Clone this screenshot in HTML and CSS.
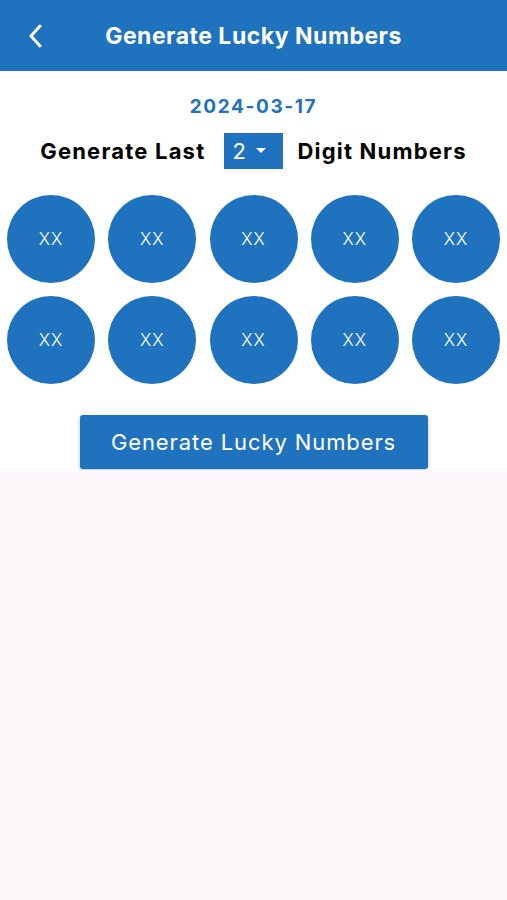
FILE: index.html
```html
<!DOCTYPE html>
<html lang="en">
<head>
  <meta charset="UTF-8" />
  <meta name="viewport" content="width=device-width, initial-scale=1.0" />
  <title>Generate Lucky Numbers</title>
  <link rel="stylesheet" href="styles.css">
</head>
<body>
  <header class="app-bar">
    <button class="back-btn" aria-label="Back">
      <svg width="14" height="24" viewBox="0 0 14 24"><path d="M12 2 L3 12 L12 22" fill="none" stroke="#fff" stroke-width="3" stroke-linecap="round" stroke-linejoin="round"/></svg>
    </button>
    <h1>Generate Lucky Numbers</h1>
  </header>

  <main class="content">
    <div class="date">2024-03-17</div>

    <div class="digits-row">
      <span>Generate Last</span>
      <div class="select">
        <span>2</span>
        <svg width="10" height="6" viewBox="0 0 10 6"><path d="M0 0 L10 0 L5 5 Z" fill="#fff"/></svg>
      </div>
      <span>Digit Numbers</span>
    </div>

    <div class="balls">
      <div class="ball">XX</div>
      <div class="ball">XX</div>
      <div class="ball">XX</div>
      <div class="ball">XX</div>
      <div class="ball">XX</div>
      <div class="ball">XX</div>
      <div class="ball">XX</div>
      <div class="ball">XX</div>
      <div class="ball">XX</div>
      <div class="ball">XX</div>
    </div>

    <div class="actions">
      <button class="generate-btn">Generate Lucky Numbers</button>
    </div>
  </main>
</body>
</html>
```

FILE: styles.css
```css
:root {
  --primary: #1f72be;
  --page-bg: #fdf8fc;
}

body {
  margin: 0;
  font-family: Inter, "Noto Sans", sans-serif;
  background: var(--page-bg);
  color: #000;
}
.app-bar {
  height: 71px;
  background: var(--primary);
  display: flex;
  align-items: center;
  justify-content: center;
  position: relative;
}
.app-bar h1 {
  margin: 0;
  color: #fff;
  font-size: 23px;
  font-weight: 700;
  letter-spacing: 0.5px;
}
.back-btn {
  position: absolute;
  left: 28px;
  top: 24px;
  background: none;
  border: none;
  padding: 0;
  display: flex;
}
.content {
  background: #fff;
  padding-top: 22px;
  padding-bottom: 1px;
}
.date {
  text-align: center;
  color: var(--primary);
  font-size: 19px;
  font-weight: 700;
  letter-spacing: 1.6px;
  line-height: 28px;
}
.digits-row {
  margin-top: 12px;
  display: flex;
  align-items: center;
  justify-content: center;
  gap: 14px;
  font-size: 22px;
  font-weight: 700;
  letter-spacing: 1.2px;
}
.select {
  width: 59px;
  height: 36px;
  box-sizing: border-box;
  background: var(--primary);
  color: #fff;
  display: flex;
  align-items: center;
  gap: 10px;
  padding-left: 8px;
  margin-left: 5px;
  font-weight: 400;
  font-size: 22px;
  letter-spacing: 0;
}
.balls {
  margin-top: 26px;
  padding: 0 7px;
  display: grid;
  grid-template-columns: repeat(5, 88px);
  justify-content: space-between;
  row-gap: 13px;
}
.ball {
  width: 88px;
  height: 88px;
  border-radius: 50%;
  background: var(--primary);
  color: #fff;
  display: flex;
  align-items: center;
  justify-content: center;
  font-size: 17px;
  font-weight: 300;
  letter-spacing: 1px;
}
.actions {
  display: flex;
  justify-content: center;
  margin-top: 31px;
}
.generate-btn {
  width: 348px;
  height: 54px;
  background: var(--primary);
  color: #fff;
  border: none;
  border-radius: 3px;
  font-family: inherit;
  font-size: 22px;
  letter-spacing: 0.9px;
  box-shadow: 0 2px 4px rgba(0, 0, 0, 0.25);
}
```
